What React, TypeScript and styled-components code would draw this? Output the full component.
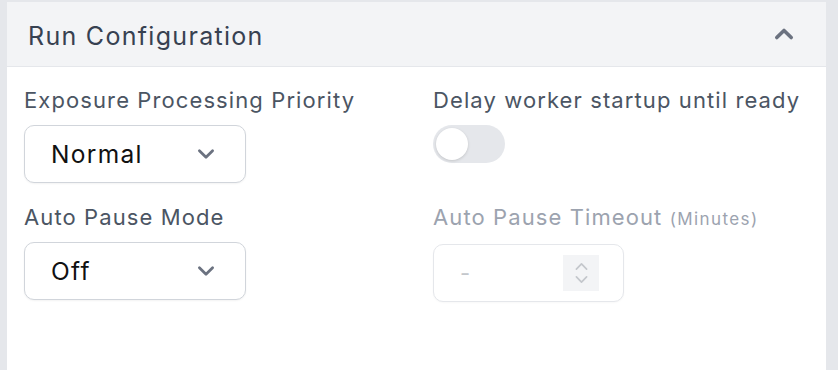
import styled, { createGlobalStyle } from 'styled-components';

const GlobalStyle = createGlobalStyle`
  html, body {
    margin: 0;
    padding: 0;
    background: #e5e7eb;
    font-family: Inter, 'Noto Sans', sans-serif;
  }
  * {
    box-sizing: border-box;
  }
`;

const ChevronDown = ({ size = 20, color = '#6b7280', width = 2.5 }) => (
  <svg width={size} height={size} viewBox="0 0 20 20" fill="none">
    <path d="M4 7l6 6 6-6" stroke={color} strokeWidth={width} strokeLinecap="round" strokeLinejoin="round" />
  </svg>
);

const ChevronUp = ({ size = 20, color = '#6b7280', width = 2.5 }) => (
  <svg width={size} height={size} viewBox="0 0 20 20" fill="none">
    <path d="M4 13l6-6 6 6" stroke={color} strokeWidth={width} strokeLinecap="round" strokeLinejoin="round" />
  </svg>
);

export default function App() {
  return (
    <>
      <GlobalStyle />
      <Page>
        <Card>
          <Header>
            <Title>Run Configuration</Title>
            <ChevronUp size={24} width={3} />
          </Header>
          <Body>
            <Field>
              <Label>Exposure Processing Priority</Label>
              <Select>
                <span>Normal</span>
                <ChevronDown size={22} />
              </Select>
            </Field>
            <Field>
              <Label>Delay worker startup until ready</Label>
              <Toggle>
                <Knob />
              </Toggle>
            </Field>
            <Field>
              <Label>Auto Pause Mode</Label>
              <Select>
                <span>Off</span>
                <ChevronDown size={22} />
              </Select>
            </Field>
            <Field>
              <Label $disabled>
                Auto Pause Timeout <Unit>(Minutes)</Unit>
              </Label>
              <NumberInput>
                <Placeholder>-</Placeholder>
                <Spinner>
                  <ChevronUp size={17} color="#c4c7cc" width={2} />
                  <ChevronDown size={17} color="#c4c7cc" width={2} />
                </Spinner>
              </NumberInput>
            </Field>
          </Body>
        </Card>
      </Page>
    </>
  );
}

const Page = styled.div`
  padding: 2px 12px 0 7px;
  height: 370px;
  overflow: hidden;
`;

const Card = styled.section`
  background: #ffffff;
  min-height: 400px;
`;

const Header = styled.div`
  height: 65px;
  display: flex;
  align-items: center;
  justify-content: space-between;
  padding: 0 30px 0 21px;
  background: #f3f4f6;
  border-bottom: 1px solid #e5e7eb;
`;

const Title = styled.h2`
  margin: 0;
  padding-top: 4px;
  font-size: 25px;
  font-weight: 400;
  letter-spacing: 1.3px;
  color: #374151;
`;

const Body = styled.div`
  display: grid;
  grid-template-columns: 1fr 1fr;
  column-gap: 33px;
  row-gap: 22px;
  padding: 21px 17px;
`;

const Field = styled.div`
  display: flex;
  flex-direction: column;
  align-items: flex-start;
`;

const Label = styled.label<{ $disabled?: boolean }>`
  font-size: 22px;
  line-height: 24px;
  letter-spacing: 1.1px;
  margin-bottom: 13px;
  color: ${(p) => (p.$disabled ? '#9ca3af' : '#4b5563')};
  white-space: nowrap;
`;

const Unit = styled.span`
  font-size: 17px;
  letter-spacing: 1.4px;
`;

const Select = styled.div`
  width: 222px;
  height: 58px;
  display: flex;
  align-items: center;
  justify-content: space-between;
  padding: 0 28px 0 26px;
  border: 1px solid #d1d5db;
  border-radius: 10px;
  background: #ffffff;
  box-shadow: 0 1px 2px rgba(0, 0, 0, 0.05);
  font-size: 24.5px;
  letter-spacing: 1.3px;
  color: #111111;
`;

const Toggle = styled.div`
  width: 72px;
  height: 38px;
  border-radius: 19px;
  background: #e5e7eb;
  padding: 3px;
  display: flex;
  align-items: center;
`;

const Knob = styled.div`
  width: 32px;
  height: 32px;
  border-radius: 50%;
  background: #ffffff;
  box-shadow: 0 1px 3px rgba(0, 0, 0, 0.15);
`;

const NumberInput = styled.div`
  width: 191px;
  height: 58px;
  display: flex;
  align-items: center;
  justify-content: space-between;
  padding: 0 24px 0 26px;
  border: 1px solid #e5e7eb;
  border-radius: 10px;
  box-shadow: 0 1px 2px rgba(0, 0, 0, 0.03);
  background: #ffffff;
`;

const Placeholder = styled.span`
  font-size: 22px;
  color: #c4c7cc;
`;

const Spinner = styled.div`
  width: 36px;
  height: 36px;
  background: #f3f4f6;
  display: flex;
  flex-direction: column;
  align-items: center;
  justify-content: center;
  svg {
    margin: -2px 0;
  }
`;
